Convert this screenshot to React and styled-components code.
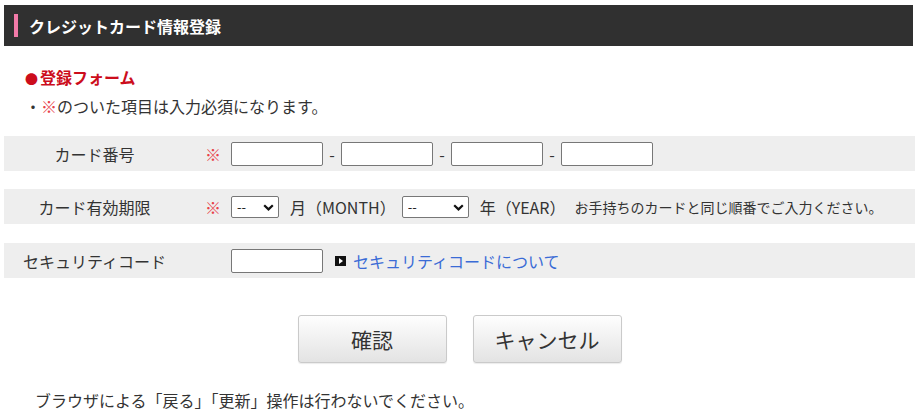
import React from "react";
import styled, { createGlobalStyle } from "styled-components";

const GlobalStyle = createGlobalStyle`
  body {
    margin: 0;
    background: #fff;
    color: #333;
    font-family: "Noto Sans CJK JP", "Noto Sans", sans-serif;
    font-size: 16px;
  }
`;

const Page = styled.div`
  padding: 5px 2px 0 4px;
`;

const TitleBar = styled.div`
  height: 41px;
  margin-right: 2px;
  background: #303030;
  display: flex;
  align-items: center;
  padding-left: 10px;
  gap: 11px;
`;

const AccentBar = styled.span`
  width: 4px;
  height: 23px;
  background: #f27aa8;
`;

const Title = styled.h1`
  margin: 0;
  color: #fff;
  font-size: 16px;
  font-weight: 700;
  line-height: 24px;
`;

const Intro = styled.div`
  padding: 19px 0 0 21px;
`;

const FormHeading = styled.h2`
  margin: 0;
  color: #cc0d1c;
  font-size: 16px;
  font-weight: 700;
  line-height: 24px;
`;

const Dot = styled.span`
  font-size: 13px;
  margin-right: 2px;
`;

const Notice = styled.p`
  margin: 3px 0 0;
  line-height: 24px;
  font-size: 16px;
`;

const Req = styled.span`
  color: #e8424a;
`;

const Form = styled.div`
  margin-top: 18px;
  display: flex;
  flex-direction: column;
  gap: 18px;
`;

const Row = styled.div`
  height: 35px;
  background: #eeeeee;
  display: flex;
  align-items: center;
  margin-top: ${(p) => p.$offset || 0}px;
`;

const Label = styled.div`
  width: 181px;
  text-align: center;
  line-height: 24px;
`;

const Mark = styled.div`
  width: 46px;
  box-sizing: border-box;
  padding-left: 20px;
  color: #e8424a;
  line-height: 24px;
`;

const TextInput = styled.input`
  box-sizing: border-box;
  width: 92px;
  height: 24px;
  margin: 0;
  border: 1px solid #777;
  border-radius: 2px;
  background: #fff;
  font-size: 14px;
  padding: 0 4px;
`;

const Dash = styled.span`
  width: 18px;
  text-align: center;
  line-height: 24px;
`;

const SelectWrap = styled.span`
  position: relative;
  display: inline-flex;
  width: ${(p) => p.$width}px;
  height: 22px;
`;

const Select = styled.select`
  appearance: none;
  box-sizing: border-box;
  width: 100%;
  height: 100%;
  margin: 0;
  border: 1px solid #777;
  border-radius: 2px;
  background: #fff;
  color: #222;
  font-family: "Noto Sans CJK JP", sans-serif;
  font-size: 13px;
  padding: 0 0 0 5px;
`;

const Chevron = styled.svg`
  position: absolute;
  right: 5px;
  top: 8px;
  pointer-events: none;
`;

const Unit = styled.span`
  margin-left: ${(p) => p.$before}px;
  margin-right: ${(p) => p.$after}px;
  line-height: 24px;
`;

const Hint = styled.span`
  font-size: 14px;
  line-height: 24px;
`;

const InfoLink = styled.a`
  display: inline-flex;
  align-items: center;
  margin-left: 12px;
  gap: 7px;
  color: #3a6bd6;
  text-decoration: none;
  line-height: 24px;
`;

const Actions = styled.div`
  margin-top: 37px;
  display: flex;
  justify-content: center;
  gap: 26px;
`;

const Button = styled.button`
  width: 149px;
  height: 48px;
  border: 1px solid #cacaca;
  border-radius: 3px;
  background: linear-gradient(#fefefe, #e3e3e3);
  box-shadow: 0 1px 1px rgba(0, 0, 0, 0.08);
  color: #333;
  font-family: "Noto Sans CJK JP", sans-serif;
  font-size: 21px;
  cursor: pointer;
`;

const Footer = styled.p`
  margin: 25px 0 0 31px;
  line-height: 24px;
`;

const ArrowIcon = () => (
  <svg width="11" height="10" viewBox="0 0 11 10" aria-hidden="true">
    <rect width="11" height="10" fill="#111" />
    <polygon points="4,2 8,5 4,8" fill="#fff" />
  </svg>
);

const Dropdown = ({ width }) => (
  <SelectWrap $width={width}>
    <Select defaultValue="--">
      <option>--</option>
    </Select>
    <Chevron width="11" height="7" viewBox="0 0 11 7" aria-hidden="true">
      <polyline
        points="1.2,1.2 5.5,5.4 9.8,1.2"
        fill="none"
        stroke="#111"
        strokeWidth="2.2"
      />
    </Chevron>
  </SelectWrap>
);

export default function App() {
  return (
    <>
      <GlobalStyle />
      <Page>
        <TitleBar>
          <AccentBar />
          <Title>クレジットカード情報登録</Title>
        </TitleBar>

        <Intro>
          <FormHeading>
            <Dot>●</Dot>登録フォーム
          </FormHeading>
          <Notice>
            ・<Req>※</Req>のついた項目は入力必須になります。
          </Notice>
        </Intro>

        <Form>
          <Row>
            <Label>カード番号</Label>
            <Mark>※</Mark>
            <TextInput />
            <Dash>-</Dash>
            <TextInput />
            <Dash>-</Dash>
            <TextInput />
            <Dash>-</Dash>
            <TextInput />
          </Row>
          <Row>
            <Label>カード有効期限</Label>
            <Mark>※</Mark>
            <Dropdown width={48} />
            <Unit $before={11} $after={6}>月（MONTH）</Unit>
            <Dropdown width={67} />
            <Unit $before={11} $after={9}>年（YEAR）</Unit>
            <Hint>お手持ちのカードと同じ順番でご入力ください。</Hint>
          </Row>
          <Row $offset={1}>
            <Label>セキュリティコード</Label>
            <Mark />
            <TextInput />
            <InfoLink href="#">
              <ArrowIcon />
              セキュリティコードについて
            </InfoLink>
          </Row>
        </Form>

        <Actions>
          <Button>確認</Button>
          <Button>キャンセル</Button>
        </Actions>

        <Footer>ブラウザによる「戻る」「更新」操作は行わないでください。</Footer>
      </Page>
    </>
  );
}
